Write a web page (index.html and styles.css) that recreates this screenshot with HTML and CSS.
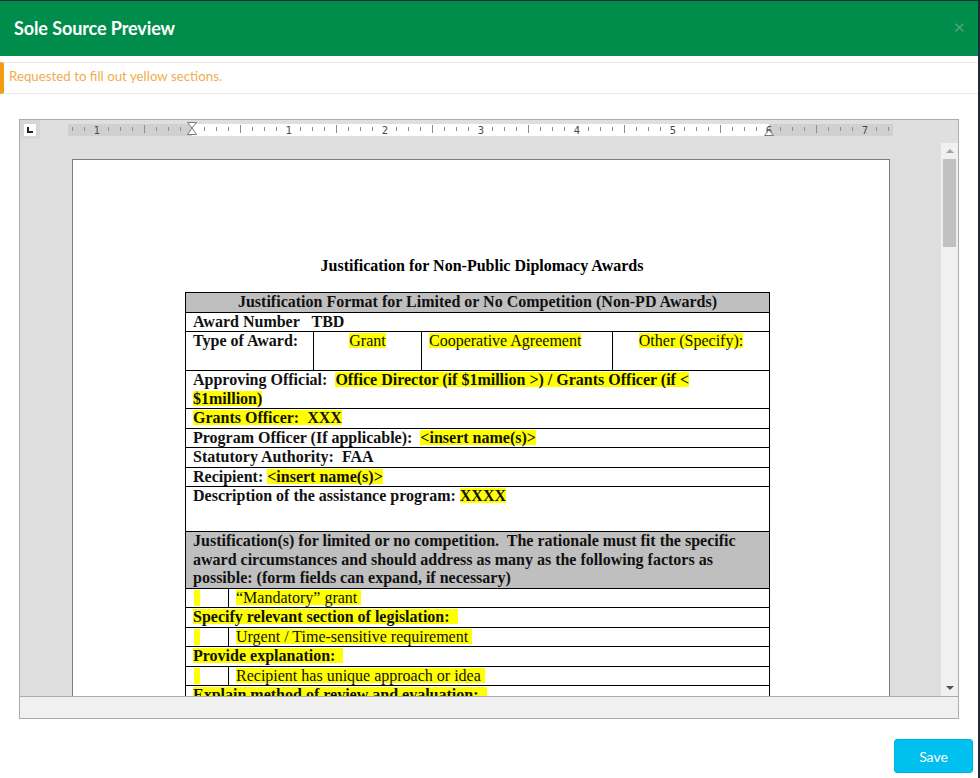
FILE: index.html
```html
<!DOCTYPE html>
<html>
<head>
<meta charset="utf-8">
<link rel="stylesheet" href="styles.css">
</head>
<body>
<div class="modal">
  <div class="modal-header">
    <h4 class="modal-title">Sole Source Preview</h4>
    <span class="close">×</span>
  </div>
  <div class="alert">Requested to fill out yellow sections.</div>

  <div class="viewer">
    <div class="ruler-row">
      <div class="tab-box"><span class="tab-inner"><span class="tab-l"></span></span></div>
      <svg class="ruler" width="825" height="19" viewBox="0 0 825 19">
        <defs>
          <pattern id="ticks" x="28" y="0" width="96" height="19" patternUnits="userSpaceOnUse">
            <g stroke="#8c8c8c" stroke-width="1">
              <line x1="12.5" y1="7" x2="12.5" y2="11"/>
              <line x1="24.5" y1="7" x2="24.5" y2="11"/>
              <line x1="36.5" y1="7" x2="36.5" y2="11"/>
              <line x1="48.5" y1="5" x2="48.5" y2="13"/>
              <line x1="60.5" y1="7" x2="60.5" y2="11"/>
              <line x1="72.5" y1="7" x2="72.5" y2="11"/>
              <line x1="84.5" y1="7" x2="84.5" y2="11"/>
            </g>
          </pattern>
        </defs>
        <rect x="0" y="4" width="825" height="12" fill="#d0d0d0"/>
        <rect x="124" y="4" width="577" height="12" fill="#ffffff"/>
        <rect x="0" y="4" width="825" height="12" fill="url(#ticks)"/>
        <g class="ruler-num" font-size="10" fill="#4a4a4a" text-anchor="middle">
          <text x="29" y="13.5">1</text>
          <text x="221" y="13.5">1</text>
          <text x="317" y="13.5">2</text>
          <text x="413" y="13.5">3</text>
          <text x="509" y="13.5">4</text>
          <text x="605" y="13.5">5</text>
          <text x="701" y="13.5">6</text>
          <text x="797" y="13.5">7</text>
        </g>
        <g fill="#ffffff" stroke="#7a7a7a" stroke-width="1">
          <path d="M119.5 2.5 H128.5 L124 8 Z"/>
          <path d="M124 8 L128.5 14.5 H119.5 Z"/>
          <path d="M696.5 15.5 L701 10 L705.5 15.5 Z"/>
        </g>
      </svg>
    </div>
    <div class="doc-row">
      <div class="doc-area">
        <div class="page">
          <div class="doc-title">Justification for Non-Public Diplomacy Awards</div>
          <table class="form">
            <colgroup>
              <col style="width:43px"><col style="width:85px"><col style="width:108px"><col style="width:191px"><col style="width:157px">
            </colgroup>
            <tr><th colspan="5" class="gray center">Justification Format for Limited or No Competition (Non-PD Awards)</th></tr>
            <tr><td colspan="5" class="b">Award Number&nbsp;&nbsp; TBD</td></tr>
            <tr class="type-row">
              <td colspan="2" class="b">Type of Award:</td>
              <td class="center"><span class="hl">Grant</span></td>
              <td><span class="hl">Cooperative Agreement</span></td>
              <td class="center"><span class="hl">Other (Specify):</span></td>
            </tr>
            <tr><td colspan="5" class="b">Approving Official:&nbsp; <span class="hl">Office Director (if $1million &gt;) / Grants Officer (if &lt; $1million)</span></td></tr>
            <tr><td colspan="5" class="b"><span class="hl">Grants Officer:&nbsp; XXX</span></td></tr>
            <tr><td colspan="5" class="b">Program Officer (If applicable):&nbsp; <span class="hl">&lt;insert name(s)&gt;</span></td></tr>
            <tr><td colspan="5" class="b">Statutory Authority:&nbsp; FAA</td></tr>
            <tr><td colspan="5" class="b">Recipient: <span class="hl">&lt;insert name(s)&gt;</span></td></tr>
            <tr class="desc-row"><td colspan="5" class="b">Description of the assistance program: <span class="hl">XXXX</span></td></tr>
            <tr><td colspan="5" class="b gray">Justification(s) for limited or no competition.&nbsp; The rationale must fit the specific award circumstances and should address as many as the following factors as possible: (form fields can expand, if necessary)</td></tr>
            <tr><td><span class="hl-box"></span></td><td colspan="4"><span class="hl">“Mandatory” grant&nbsp;</span></td></tr>
            <tr><td colspan="5" class="b"><span class="hl">Specify relevant section of legislation:&nbsp;&nbsp;</span></td></tr>
            <tr><td><span class="hl-box"></span></td><td colspan="4"><span class="hl">Urgent / Time-sensitive requirement&nbsp;</span></td></tr>
            <tr><td colspan="5" class="b"><span class="hl">Provide explanation:&nbsp;&nbsp;</span></td></tr>
            <tr><td><span class="hl-box"></span></td><td colspan="4"><span class="hl">Recipient has unique approach or idea&nbsp;</span></td></tr>
            <tr><td colspan="5" class="b"><span class="hl">Explain method of review and evaluation:&nbsp;&nbsp;</span></td></tr>
            <tr><td colspan="5" class="b">&nbsp;</td></tr>
          </table>
        </div>
      </div>
      <div class="vscroll">
        <div class="arrow-up"></div>
        <div class="thumb"></div>
        <div class="track"></div>
        <div class="arrow-down"></div>
      </div>
    </div>
    <div class="bottom-bar"></div>
  </div>

  <div class="modal-footer">
    <button class="btn-save">Save</button>
  </div>
</div>
</body>
</html>
```

FILE: styles.css
```css
html, body {
  margin: 0;
  padding: 0;
}
body {
  background: #1d2b38;
  width: 980px;
  height: 778px;
  overflow: hidden;
}
.modal {
  width: 978px;
  height: 777px;
  margin-top: 1px;
  background: #ffffff;
  font-family: "Lato", "Open Sans", sans-serif;
}
.modal-header {
  height: 55px;
  background: #008d4c;
  display: flex;
  align-items: center;
  justify-content: space-between;
  padding: 0 14px;
}
.modal-title {
  margin: 0 0 2px 0;
  color: #ffffff;
  font-size: 18px;
  font-weight: 700;
  letter-spacing: -0.1px;
}
.close {
  color: #52a77a;
  font-size: 20px;
  line-height: 1;
  margin-right: -1px;
  margin-bottom: 6px;
}
.alert {
  margin-top: 6px;
  height: 26px;
  border-top: 1px solid #e8e8e8;
  border-bottom: 1px solid #e8e8e8;
  border-left: 4px solid #f39c12;
  padding-left: 5px;
  padding-bottom: 4px;
  box-sizing: content-box;
  display: flex;
  align-items: center;
  color: #f0ad4e;
  font-size: 13.3px;
}
.viewer {
  margin: 25px 19px 0 19px;
  border: 1px solid #ababab;
  background: #dfdfdf;
}
.ruler-row {
  height: 19px;
  display: flex;
  align-items: flex-start;
}
.tab-box {
  width: 20px;
  height: 20px;
  background: #d6d6d6;
  display: flex;
  align-items: center;
  justify-content: center;
}
.tab-inner {
  width: 12px;
  height: 12px;
  background: #ffffff;
  position: relative;
  display: block;
}
.tab-l {
  position: absolute;
  left: 3px;
  top: 3px;
  width: 4px;
  height: 4px;
  border-left: 2px solid #222;
  border-bottom: 2px solid #222;
}
.ruler {
  display: block;
  margin-left: 28px;
  font-family: "DejaVu Sans", "Liberation Sans", sans-serif;
}
.doc-row {
  display: flex;
  height: 557px;
}
.doc-area {
  flex: 1;
  overflow: hidden;
  background: #dedede;
  padding-top: 20px;
  padding-left: 52px;
}
.page {
  width: 818px;
  height: 900px;
  background: #ffffff;
  border: 1px solid #7d7d7d;
  padding-top: 96px;
  box-sizing: border-box;
  font-family: "Liberation Serif", "Times New Roman", serif;
  color: #000;
  font-size: 16px;
}
.doc-title {
  text-align: center;
  font-weight: bold;
  line-height: 19px;
  margin-bottom: 17px;
  margin-left: 2px;
}
.form {
  border-collapse: collapse;
  table-layout: fixed;
  width: 584px;
  margin-left: 112px;
  font-size: 16px;
  line-height: 18.5px;
  color: #111;
}
.form th, .form td {
  border: 1px solid #000;
  padding: 0 7px;
  vertical-align: top;
  text-align: left;
  font-weight: normal;
}
.form .b { font-weight: bold; }
.form th { font-weight: bold; }
.form .center { text-align: center; }
.form .gray { background: #bfbfbf; }
.type-row td { height: 38px; }
.desc-row td { height: 44px; }
.hl {
  background: linear-gradient(to bottom, transparent 1px, #ffff00 1px, #ffff00 calc(100% - 1px), transparent calc(100% - 1px));
}
.hl-box {
  display: inline-block;
  width: 6px;
  height: 16px;
  background: #ffff00;
  vertical-align: -3px;
  margin-left: 1px;
}
.vscroll {
  width: 17px;
  margin-top: 4px;
  background: #f0f0f0;
  display: flex;
  flex-direction: column;
  align-items: center;
}
.arrow-up {
  margin-top: 6px;
  width: 0;
  height: 0;
  border-left: 4px solid transparent;
  border-right: 4px solid transparent;
  border-bottom: 4px solid #a3a3a3;
}
.thumb {
  margin-top: 6px;
  width: 13px;
  height: 88px;
  background: #c1c1c1;
}
.track { flex: 1; }
.arrow-down {
  margin-bottom: 6px;
  width: 0;
  height: 0;
  border-left: 4px solid transparent;
  border-right: 4px solid transparent;
  border-top: 4px solid #505050;
}
.bottom-bar {
  height: 21px;
  border-top: 1px solid #ababab;
  background: #f0f0f0;
}
.modal-footer {
  display: flex;
  justify-content: flex-end;
  padding: 20px 5px 0 0;
}
.btn-save {
  width: 79px;
  height: 34px;
  background: #00c0ef;
  border: 1px solid #00b4e0;
  border-radius: 3px;
  color: #ffffff;
  font-family: "Lato", "Open Sans", sans-serif;
  font-size: 14px;
  padding: 0;
}
```
